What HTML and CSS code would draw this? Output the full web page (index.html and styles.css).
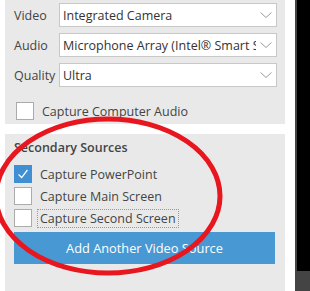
FILE: index.html
```html
<!DOCTYPE html>
<html lang="en">
<head>
  <meta charset="UTF-8">
  <title>Recording sources</title>
  <link rel="stylesheet" href="styles.css">
</head>
<body>
<div class="app">

  <div class="forms">
    <section class="panel devices">
      <div class="field">
        <span class="field-label">Video</span>
        <div class="select"><span class="value">Integrated Camera</span><svg class="chev" viewBox="0 0 12 6"><path d="M0.5 0.5 L6 5.5 L11.5 0.5"/></svg></div>
      </div>
      <div class="field">
        <span class="field-label">Audio</span>
        <div class="select"><span class="value">Microphone Array (Intel® Smart Sound Technology)</span><svg class="chev" viewBox="0 0 12 6"><path d="M0.5 0.5 L6 5.5 L11.5 0.5"/></svg></div>
      </div>
      <div class="field">
        <span class="field-label">Quality</span>
        <div class="select"><span class="value">Ultra</span><svg class="chev" viewBox="0 0 12 6"><path d="M0.5 0.5 L6 5.5 L11.5 0.5"/></svg></div>
      </div>
      <label class="check audio"><span class="box"></span><span class="text">Capture Computer Audio</span></label>
    </section>

    <section class="panel sources">
      <h3 class="heading">Secondary Sources</h3>
      <label class="check"><span class="box on"><svg viewBox="0 0 18 18"><path d="M4 9.5 L7.5 13 L14 4.5"/></svg></span><span class="text">Capture PowerPoint</span></label>
      <label class="check"><span class="box"></span><span class="text">Capture Main Screen</span></label>
      <label class="check focus"><span class="box"></span><span class="text">Capture Second Screen</span></label>
      <button class="add">Add Another Video Source</button>
    </section>
  </div>

  <div class="preview"><div class="screen"></div></div>

  <!-- red annotation drawn over the screenshot -->
  <svg class="mark" viewBox="0 0 310 291">
    <ellipse cx="108" cy="196" rx="112" ry="77"/>
  </svg>
</div>
</body>
</html>
```

FILE: styles.css
```css
body {
  margin: 0;
  background: #fff;
  font-family: "Open Sans", "Noto Sans", sans-serif;
  font-size: 12.5px;
  color: #444;
}

.app {
  position: relative;
  display: flex;
  width: 310px;
  height: 291px;
  overflow: hidden;
}

.forms {
  display: flex;
  flex-direction: column;
  gap: 10px;
  width: 280px;
  margin-left: 5px;
  margin-right: 10px;
}

.panel {
  background: #e9e9e9;
}

.devices {
  height: 124px;
  box-sizing: border-box;
  padding: 3px 8px 0 9px;
  display: flex;
  flex-direction: column;
  gap: 6px;
}

.field {
  display: flex;
  align-items: center;
  height: 24px;
}

.field-label {
  width: 45px;
  flex: none;
}

.select {
  flex: 1;
  min-width: 0;
  height: 24px;
  box-sizing: border-box;
  display: flex;
  align-items: center;
  background: #fff;
  border: 1px solid #c8c8c8;
  padding: 0 4px 0 3px;
  color: #333;
}

.value {
  flex: 1;
  min-width: 0;
  white-space: nowrap;
  overflow: hidden;
}

.chev {
  width: 12px;
  height: 6px;
  margin-left: 4px;
  flex: none;
  fill: none;
  stroke: #9a9a9a;
  stroke-width: 1;
}

.check {
  display: flex;
  align-items: center;
  gap: 8px;
  height: 22px;
}

.box {
  width: 18px;
  height: 18px;
  box-sizing: border-box;
  border: 1px solid #ababab;
  background: #fff;
  flex: none;
}

.box.on {
  background: #3f8fd2;
  border-color: #3f8fd2;
}

.box svg {
  display: block;
  width: 16px;
  height: 16px;
  fill: none;
  stroke: #fff;
  stroke-width: 1.4;
}

.audio {
  margin-top: 7px;
  padding-left: 2px;
}

.sources {
  flex: 1;
  padding: 4px 10px 0 9px;
  display: flex;
  flex-direction: column;
}

.heading {
  margin: 0 0 5px;
  font-size: 12.5px;
  font-weight: 600;
  line-height: 20px;
  color: #444;
}

.focus .text {
  outline: 1px dotted #999;
  margin-left: -2px;
  padding: 0 2px;
  line-height: 17px;
}

.add {
  margin-top: 3px;
  height: 32px;
  border: 0;
  background: #4898d3;
  color: #fff;
  font-family: inherit;
  font-size: 12.8px;
  padding: 0;
}

.preview {
  width: 15px;
  flex: none;
  background: #444;
  padding-left: 2px;
  box-sizing: border-box;
}

.screen {
  height: 271px;
  background: #000;
}

.mark {
  position: absolute;
  inset: 0;
  width: 310px;
  height: 291px;
  pointer-events: none;
}

.mark ellipse {
  fill: none;
  stroke: #e8161e;
  stroke-width: 5;
}
```
